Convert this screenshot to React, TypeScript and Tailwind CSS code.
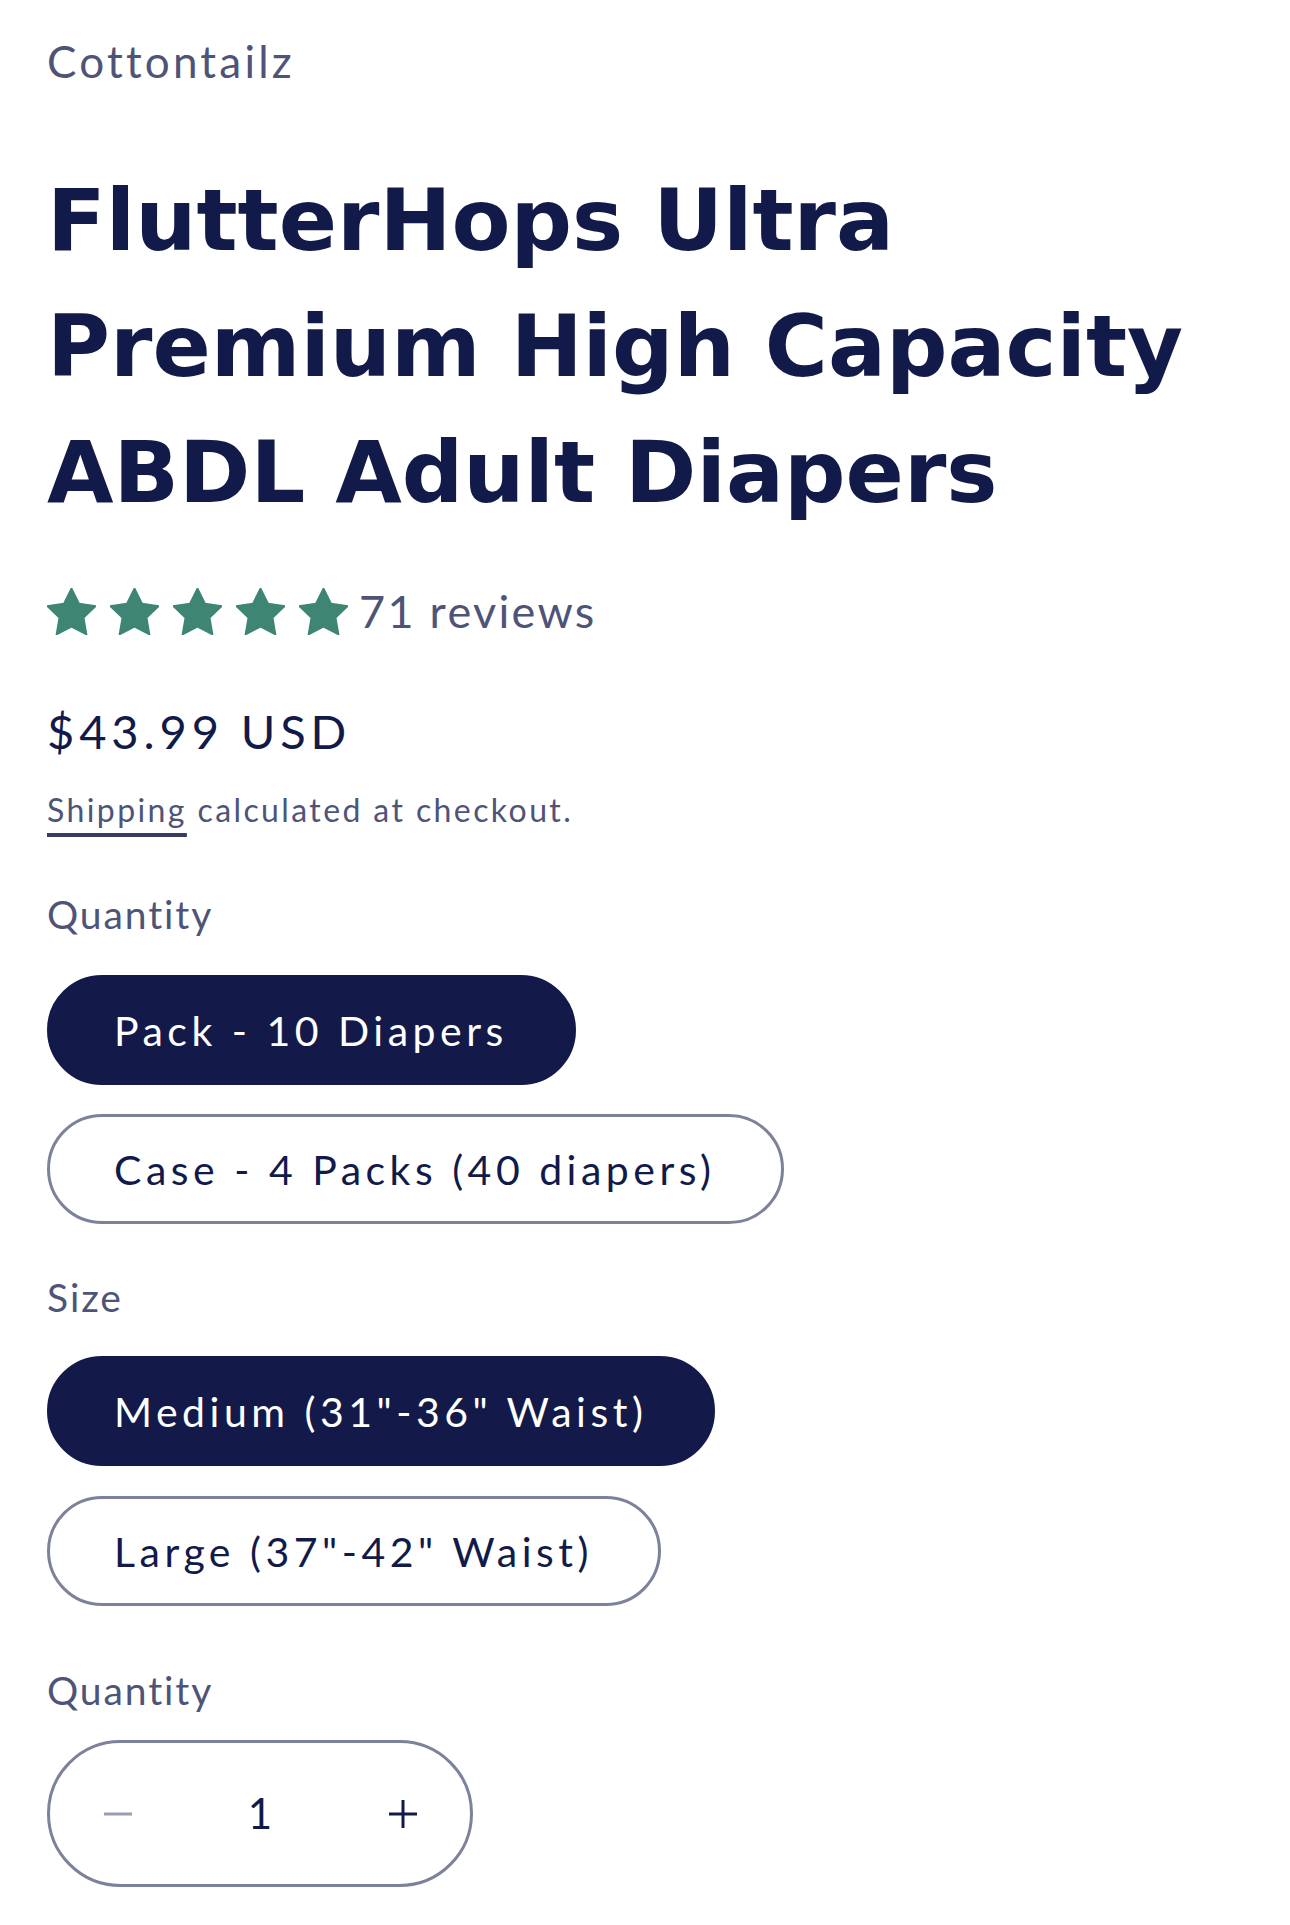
const body = "font-['Lato','Open_Sans',sans-serif]";

function Star() {
  return (
    <svg width="49" height="47" viewBox="2 2 20 19.1" className="shrink-0">
      <path
        d="M12 2l3.09 6.26L22 9.27l-5 4.87 1.18 6.88L12 17.77l-6.18 3.25L7 14.14 2 9.27l6.91-1.01L12 2z"
        fill="#3f8574"
        stroke="#3f8574"
        strokeWidth="0.6"
        strokeLinejoin="round"
      />
    </svg>
  );
}

function Pill({ label, selected }: { label: string; selected?: boolean }) {
  return (
    <button
      className={`h-[110px] pl-[64px] pr-[65px] rounded-full text-[41px] tracking-[4.5px] leading-none whitespace-nowrap ${body} ${
        selected
          ? "bg-[#131a4a] text-white border-[3px] border-[#131a4a]"
          : "bg-white text-[#121a4a] border-[3px] border-[#7d829b]"
      }`}
    >
      {label}
    </button>
  );
}

export default function App() {
  return (
    <div className="min-h-[1925px] w-[1290px] bg-white px-[47px] pt-[36px]">
      <p className={`${body} text-[44px] leading-[50px] tracking-[3.2px] text-[#4e5478]`}>
        Cottontailz
      </p>

      <h1 className="mt-[71px] font-['DejaVu_Sans',sans-serif] font-bold text-[86px] leading-[126px] text-[#121a4a]">
        FlutterHops Ultra Premium High Capacity ABDL Adult Diapers
      </h1>

      <div className="mt-[51px] h-[50px] flex items-center">
        <div className="flex gap-[14px]">
          <Star />
          <Star />
          <Star />
          <Star />
          <Star />
        </div>
        <span className={`ml-[11px] ${body} text-[45px] leading-none tracking-[2.3px] text-[#4e5478]`}>
          71 reviews
        </span>
      </div>

      <p className={`mt-[67px] h-[56px] leading-[56px] ${body} text-[47px] tracking-[4.9px] text-[#121a4a]`}>
        $43.99 USD
      </p>

      <p className={`mt-[31px] h-[40px] leading-[40px] ${body} text-[32px] tracking-[2.4px] text-[#4e5478]`}>
        <span className="underline decoration-[4px] underline-offset-[11px] decoration-[#363d63]">
          Shipping
        </span>{" "}
        calculated at checkout.
      </p>

      <p className={`mt-[62px] h-[44px] leading-[44px] ${body} text-[39px] tracking-[1.9px] text-[#4e5478]`}>
        Quantity
      </p>
      <div className="mt-[39px] flex flex-col items-start gap-[29px]">
        <Pill label="Pack - 10 Diapers" selected />
        <Pill label="Case - 4 Packs (40 diapers)" />
      </div>

      <p className={`mt-[51px] h-[44px] leading-[44px] ${body} text-[39px] tracking-[1.9px] text-[#4e5478]`}>
        Size
      </p>
      <div className="mt-[37px] flex flex-col items-start gap-[30px]">
        <Pill label={'Medium (31"-36" Waist)'} selected />
        <Pill label={'Large (37"-42" Waist)'} />
      </div>

      <p className={`mt-[62px] h-[44px] leading-[44px] ${body} text-[39px] tracking-[1.9px] text-[#4e5478]`}>
        Quantity
      </p>
      <div className="mt-[28px] w-[426px] h-[147px] rounded-full border-[3px] border-[#7d829b] flex items-center">
        <button className="w-[135px] h-full flex items-center justify-center">
          <svg width="28" height="4" viewBox="0 0 28 4">
            <rect width="28" height="3" y="0.5" fill="#9a9db1" />
          </svg>
        </button>
        <span className={`flex-1 text-center ${body} text-[42px] text-[#121a4a]`}>1</span>
        <button className="w-[135px] h-full flex items-center justify-center">
          <svg width="28" height="28" viewBox="0 0 28 28">
            <rect x="0" y="12.5" width="28" height="3" fill="#121a4a" />
            <rect x="12.5" y="0" width="3" height="28" fill="#121a4a" />
          </svg>
        </button>
      </div>
    </div>
  );
}
